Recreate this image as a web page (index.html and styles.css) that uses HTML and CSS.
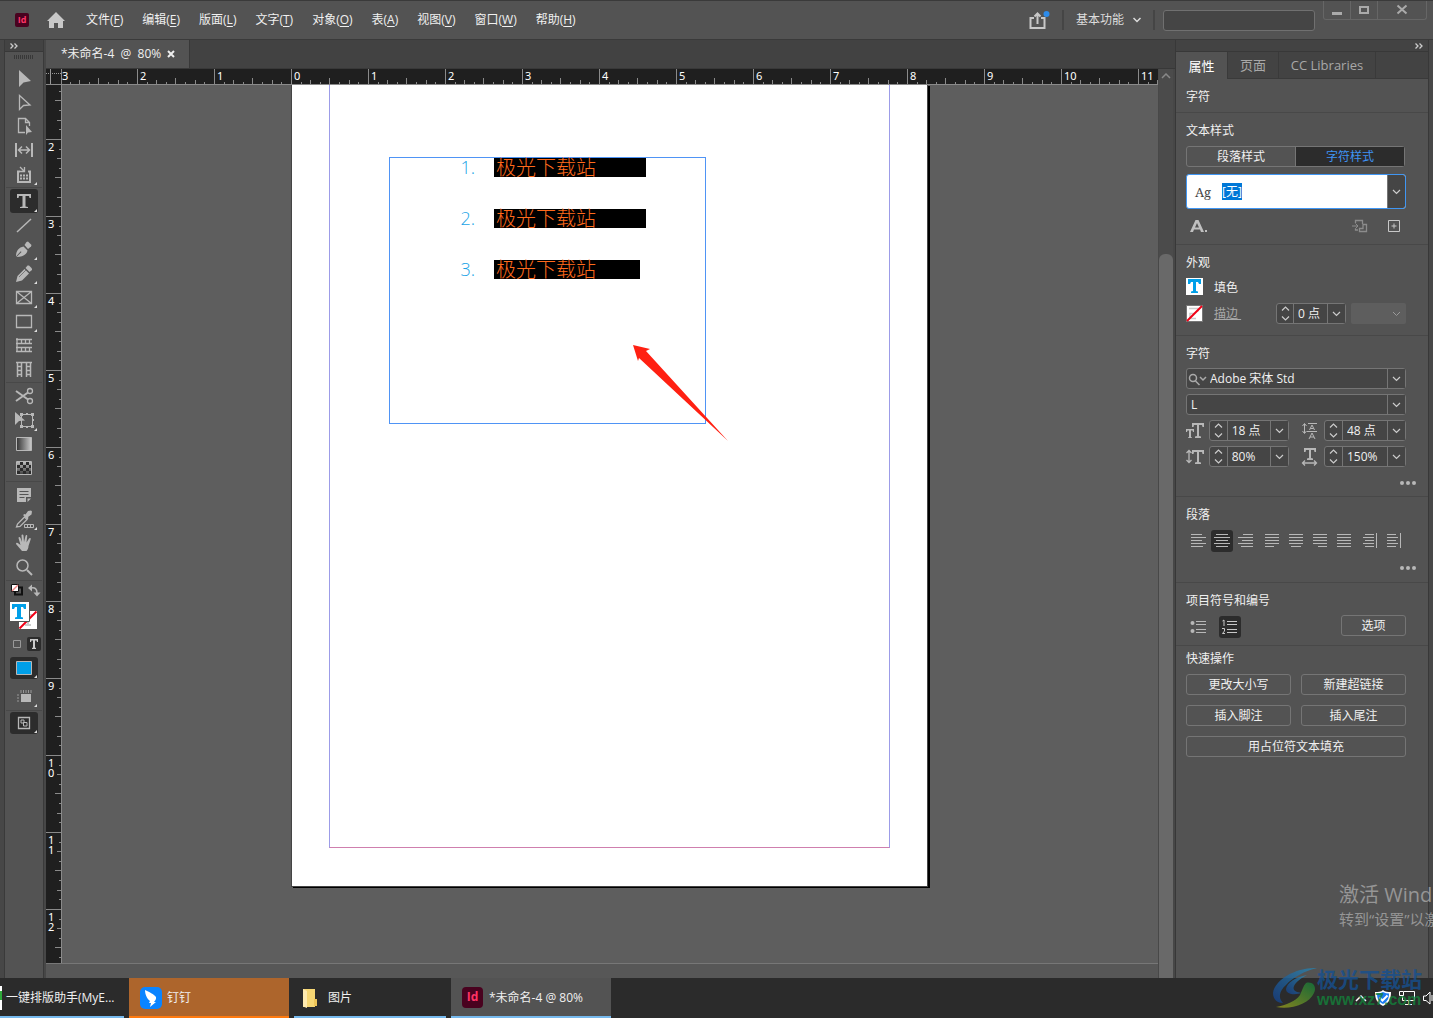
FILE: index.html
```html
<!DOCTYPE html>
<html lang="zh-CN">
<head>
<meta charset="utf-8">
<title>*未命名-4 @ 80%</title>
<link rel="stylesheet" href="styles.css">
</head>
<body>
<header class="topbar">
  <span class="id-logo">Id</span>
  <button class="home" aria-label="主页"><svg width="18" height="16" viewBox="0 0 18 16"><path d="M9 0 18 9h-2v7h-5v-5H7v5H2V9H0z" fill="#c8c8c8"/></svg></button>
  <nav class="menu">
    <button>文件(<u>F</u>)</button><button>编辑(<u>E</u>)</button><button>版面(<u>L</u>)</button><button>文字(<u>T</u>)</button><button>对象(<u>O</u>)</button><button>表(<u>A</u>)</button><button>视图(<u>V</u>)</button><button>窗口(<u>W</u>)</button><button>帮助(<u>H</u>)</button>
  </nav>
  <div class="top-right">
    <button class="share" aria-label="共享"><svg width="22" height="20" viewBox="0 0 22 20"><path d="M6 8H2.500v10h14V8H13M9.500 14V4M6.500 6.500l3-3 3 3" fill="none" stroke="#c8c8c8" stroke-width="2"/><circle cx="18.500" cy="4" r="3" fill="#2d8ceb"/></svg></button>
    <i class="bar"></i>
    <button class="workspace">基本功能<svg width="8" height="6" viewBox="0 0 8 6"><path d="M.5 1 4 4.500 7.500 1" fill="none" stroke="#ddd" stroke-width="1.500"/></svg></button>
    <i class="bar"></i>
    <input class="search" type="text" aria-label="搜索">
    <div class="win-controls">
      <button aria-label="最小化"><svg width="12" height="12"><path d="M1 8h10v3H1z" fill="#aaa"/></svg></button>
      <button aria-label="最大化"><svg width="12" height="12"><path d="M2 3h8v6H2z" fill="none" stroke="#aaa" stroke-width="2"/></svg></button>
      <button class="close" aria-label="关闭"><svg width="12" height="12"><path d="m1.500 1.500 9 8m0-8-9 8" stroke="#aaa" stroke-width="2"/></svg></button>
    </div>
  </div>
</header>

<main class="main">
  <aside class="tools">
    <div class="strip"><svg width="8" height="6"><path d="m.5.500 2.500 2.500L.5 5.500m4-5L7 3 4.500 5.500" fill="none" stroke="#ccc" stroke-width="1.300"/></svg></div>
    <div class="grip"></div>
    <div class="tool-group">
      <button aria-label="选择"><svg width="28" height="24"><path d="M9 4v17l4.500-4.500L21 15z" fill="#b8b8b8"/></svg></button>
      <button aria-label="直接选择"><svg width="28" height="24"><path d="M9.500 5.500v14l4-4 6.500-.5z" fill="none" stroke="#b8b8b8" stroke-width="1.300"/></svg></button>
      <button aria-label="页面"><svg width="28" height="24"><path d="M15 18.500H8.500v-14h7l4 4V12M15.500 4.500v4h4" fill="none" stroke="#b8b8b8" stroke-width="1.300"/><path d="M16 11v10l2-2.500 4-.500z" fill="#b8b8b8"/></svg></button>
      <button aria-label="间隙"><svg width="28" height="24"><path d="M6 5v14M22 5v14" stroke="#b8b8b8" stroke-width="2"/><path d="M9 12h10M12 8.500 8.500 12l3.500 3.500M16 8.500l3.500 3.500-3.500 3.500" fill="none" stroke="#b8b8b8" stroke-width="1.500"/></svg></button>
      <button class="more" aria-label="内容收集器"><svg width="28" height="24"><path d="M10 9.500H8V20h12V9.500h-2" fill="none" stroke="#b8b8b8" stroke-width="2"/><path d="M10 13.500h2m1 0h2m1 0h2m-8 3h2m1 0h2m1 0h2" stroke="#b8b8b8" stroke-width="2"/><path d="m10 5 4 4m.500-4v4.500H10" fill="none" stroke="#b8b8b8" stroke-width="1.300"/></svg></button>
    </div>
    <div class="tool-group">
      <button class="more on" aria-label="文字"><svg width="28" height="24"><path d="M7 5h14v4h-1.500L19 7h-3.500v10.500l2.500.500v1h-8v-1l2.500-.500V7H9l-.500 2H7z" fill="#b8b8b8"/></svg></button>
      <button aria-label="直线"><svg width="28" height="24"><path d="m7 19 14-13" stroke="#b8b8b8" stroke-width="1.500"/></svg></button>
      <button class="more" aria-label="钢笔"><svg width="28" height="24"><path d="M6 19.500c0-6 3-9 7.500-10l4 4C17 17 13 20 6.500 20l5-5-.700-.700z" fill="#b8b8b8"/><path d="m14.500 8 2-3 1.500-.500 3.500 3.500-.500 1.500-3 2.500z" fill="#b8b8b8"/></svg></button>
      <button class="more" aria-label="铅笔"><svg width="28" height="24"><path d="m6 21 1.500-6 7-7 4.500 4.500-7 7z" fill="#b8b8b8"/><path d="m15.500 7 2-2.500h1.500l3 3v1.500l-2.500 2z" fill="#b8b8b8"/><path d="m9 16 7-7" stroke="#777"/></svg></button>
      <button class="more" aria-label="矩形框架"><svg width="28" height="24"><path d="M6.500 6.500h15v12h-15zl15 12m0-12-15 12" fill="none" stroke="#b8b8b8" stroke-width="1.300"/></svg></button>
      <button class="more" aria-label="矩形"><svg width="28" height="24"><path d="M6.500 6.500h15v12h-15z" fill="none" stroke="#b8b8b8" stroke-width="1.300"/></svg></button>
      <button aria-label="水平网格"><svg width="28" height="24"><path d="M7 5v14M6 6.500h16M6 10.500h16M6 14.500h16M6 18.500h16M11.500 6v4m4-4v4m4-4v4m-8 4.500v4m4-4v4m4-4v4" fill="none" stroke="#b8b8b8" stroke-width="1.300"/></svg></button>
      <button aria-label="垂直网格"><svg width="28" height="24"><path d="M6 5.500h16M7.500 5v15M11.500 5v15M16.500 5v15M20.500 5v15M7.500 9.500h4m-4 4h4m-4 4h4m5-8h4m-4 4h4m-4 4h4" fill="none" stroke="#b8b8b8" stroke-width="1.500"/></svg></button>
    </div>
    <div class="tool-group">
      <button aria-label="剪刀"><svg width="28" height="24"><path d="m6 7 12 8.500M6 17l12-8.500" stroke="#b8b8b8" stroke-width="2"/><circle cx="20" cy="7" r="2.500" fill="none" stroke="#b8b8b8" stroke-width="1.300"/><circle cx="20" cy="17" r="2.500" fill="none" stroke="#b8b8b8" stroke-width="1.300"/></svg></button>
      <button class="more" aria-label="自由变换"><svg width="28" height="24"><path d="M11.500 6.500h11v12h-11z" fill="none" stroke="#b8b8b8"/><path d="M10 5h3v3h-3zm6 0h2v2h-2zm5 0h3v3h-3zm0 12h3v3h-3zm-5 1h2v2h-2zm-6-1h3v3h-3zm12-6h2v2h-2z" fill="#b8b8b8"/><path d="M5 4v13l4-4 6-.500z" fill="#b8b8b8"/></svg></button>
      <button aria-label="渐变色板"><svg width="28" height="24"><defs><linearGradient id="g"><stop stop-color="#333"/><stop offset="1" stop-color="#ccc"/></linearGradient></defs><path d="M6.500 5.500h15v13h-15z" fill="url(#g)" stroke="#b8b8b8"/></svg></button>
      <button aria-label="渐变羽化"><svg width="28" height="24"><defs><linearGradient id="f" x2="0" y2="1"><stop stop-color="#bbb"/><stop offset="1" stop-color="#444"/></linearGradient></defs><path d="M6.500 5.500h15v13h-15z" fill="#2c2c2c" stroke="#b8b8b8"/><path d="M7 6h3v3H7zm6 0h3v3h-3zm-3 3h3v3h-3zm6 0h3v3h-3zm-9 3h3v3H7zm6 0h3v3h-3zm-3 3h3v3h-3zm6 0h3v3h-3zm3-9h2v3h-2zm0 6h2v3h-2z" fill="url(#f)"/></svg></button>
    </div>
    <div class="tool-group">
      <button aria-label="附注"><svg width="28" height="24"><path d="M7 5h14v9h-5v5H7z" fill="#b8b8b8"/><path d="M17.500 19v-3.500H21z" fill="#b8b8b8"/><path d="M9.500 8.500h9m-9 3h9m-9 3h5" stroke="#535353"/></svg></button>
      <button class="more" aria-label="吸管"><svg width="28" height="24"><path d="m6.500 20 1-3 7-7 2.500 2.500-7 7z" fill="none" stroke="#b8b8b8" stroke-width="1.300"/><path d="m13 8 1.500-1 1 .500 2.500-3.500 3-.500 1 1-.500 3-3.500 2.500.500 1-1 1.500z" fill="#b8b8b8"/><path d="M14.500 17.500h9v3h-9zm3 0v3m3-3v3" fill="none" stroke="#b8b8b8"/></svg></button>
      <button aria-label="抓手"><svg width="28" height="24"><path d="M12 20c-2-2-4-5-6-7 0-1.500 1.500-1.500 2.500-.500l2 1.500L8.500 7c0-1.500 1.500-1.500 2 0l1.500 4-.5-6.500c0-1.500 1.700-1.500 2 0l.5 6.500 1.500-6c.3-1.400 2-1.200 1.700.3L16.500 11.500l2.500-4c.800-1.200 2.200-.400 1.700.800L18.500 15c0 2-1 4-2 5z" fill="#b8b8b8"/></svg></button>
      <button aria-label="缩放"><svg width="28" height="24"><circle cx="12.500" cy="10.500" r="5.500" fill="none" stroke="#b8b8b8" stroke-width="1.500"/><path d="m17 15 5 5" stroke="#b8b8b8" stroke-width="2"/></svg></button>
    </div>
    <div class="tool-group colors">
      <div class="pair">
        <button aria-label="默认颜色"><svg width="14" height="14"><path d="M5 4.500h7v7H5z" fill="none" stroke="#111" stroke-width="2"/><path d="M1.500 1.500h7v7h-7z" fill="#fff" stroke="#111"/><path d="m2 8 6-6" stroke="#e88" stroke-width="1.500"/></svg></button>
        <button aria-label="互换"><svg width="14" height="14"><path d="M4 5c4-1 6 1 6 5" fill="none" stroke="#b8b8b8" stroke-width="1.500"/><path d="m1 5 4-3.500v7zM10 13.500 6.500 9.500h7z" fill="#b8b8b8"/></svg></button>
      </div>
      <button class="fillstroke" aria-label="填色和描边"><svg width="28" height="28"><path d="M9 9h18v18H9z" fill="#fff"/><path d="M13 13h10m-5 0v10m-3 0h6" stroke="#ccc" stroke-width="2"/><path d="m9.500 26.500 17-17" stroke="#f00016" stroke-width="2"/><path d="M0 0h19v19H0z" fill="#fff"/><path d="M19.500 0v19.500H0" fill="none" stroke="#535353"/><path d="M2 2h14v5h-2l-1-2h-2v10l2 .500V17H5v-1.500L7 15V5H5L4 7H2z" fill="#009fe8"/></svg></button>
      <div class="pair">
        <button aria-label="容器"><svg width="14" height="14"><path d="M3.500 3.500h7v7h-7z" fill="none" stroke="#999"/></svg></button>
        <button class="on" aria-label="文本"><svg width="14" height="14"><path d="M3 2h8v3h-1L9.500 3.500H8v7l1 .500v1H5v-1l1-.500v-7H4.500L4 5H3z" fill="#ccc"/></svg></button>
      </div>
      <button class="more on" aria-label="应用颜色"><svg width="28" height="22"><path d="M6.500 4.500h15v13h-15z" fill="#009fe8" stroke="#b8b8b8"/></svg></button>
      <button class="more" aria-label="视图选项"><svg width="28" height="22"><path d="M11 8h10v8H11z" fill="#b8b8b8"/><path d="M11 4v3m2.500-3v3M16 4v3m2.500-3v3M21 4v3M7 9h2m-2 3h2m-2 3h2" stroke="#999"/></svg></button>
    </div>
    <div class="tool-group last">
      <button class="more on" aria-label="屏幕模式"><svg width="28" height="22"><path d="M8.500 5.500h11v11h-11z" fill="none" stroke="#b8b8b8" stroke-width="1.300"/><path d="M11 8h3v3h-3zM13.500 10.500h3.500v3.500h-3.500z" fill="none" stroke="#b8b8b8"/></svg></button>
    </div>
  </aside>

  <section class="doc">
    <div class="tabs"><div class="doc-tab"><span>*未命名-4&nbsp; @&nbsp; 80%</span><button aria-label="关闭文档"><svg width="8" height="8"><path d="m1 1 6 6m0-6L1 7" stroke="#eee" stroke-width="2"/></svg></button></div></div>
    <div class="stage">
      <div class="corner"></div>
      <div class="ruler-h"><span class="first">3</span><span>2</span><span>1</span><span>0</span><span>1</span><span>2</span><span>3</span><span>4</span><span>5</span><span>6</span><span>7</span><span>8</span><span>9</span><span>10</span><span class="rest">11</span></div>
      <div class="scroll"><svg width="10" height="6"><path d="m1 5 4-4 4 4" fill="none" stroke="#888" stroke-width="1.500"/></svg><i class="thumb"></i></div>
      <div class="ruler-v"><span class="first"></span><span>2</span><span>3</span><span>4</span><span>5</span><span>6</span><span>7</span><span>8</span><span>9</span><span>1<br>0</span><span>1<br>1</span><span class="rest">1<br>2</span></div>
      <div class="canvas">
        <div class="sheet">
          <div class="margins"></div>
          <ol class="frame">
            <li><span class="num">1.</span><mark class="wide">极光下载站</mark></li>
            <li><span class="num">2.</span><mark class="wide">极光下载站</mark></li>
            <li><span class="num">3.</span><mark>极光下载站</mark></li>
          </ol>
          <svg class="arrow" width="96" height="97"><path d="m0 0 17 4-4 2 82 90L6 13l-1 3z" fill="#ff2012"/></svg>
        </div>
      </div>
      <div class="status"></div>
    </div>
  </section>

  <aside class="panel">
    <div class="strip right"><svg width="8" height="6"><path d="m.5.500 2.500 2.500L.5 5.500m4-5L7 3 4.500 5.500" fill="none" stroke="#ccc" stroke-width="1.300"/></svg></div>
    <div class="panel-tabs"><button class="active">属性</button><button>页面</button><button class="cc">CC Libraries</button></div>
    <section class="sec"><h2>字符</h2></section>

    <section class="sec">
      <h2>文本样式</h2>
      <div class="seg"><button>段落样式</button><button class="sel">字符样式</button></div>
      <div class="style-box"><span class="ag">Ag</span><div class="style-text"><mark>[无]</mark></div><button class="dd" aria-label="选择样式"></button></div>
      <div class="row style-actions">
        <button aria-label="清除优先选项"><svg width="18" height="16"><path d="M0 14 5.500 2h3L14 14h-3l-1-2.500H4L3 14zm5-4.500h4L7 5zM15 12h2v2h-2z" fill="#c0c0c0"/></svg></button>
        <button class="push" aria-label="重新定义样式"><svg width="16" height="14"><path d="M3.500 4V1.500h7V5M3.500 9.500V11H6M11 5.500h3.500v7H7.500V9.500H11z" fill="none" stroke="#8c8c8c" stroke-width="1.300"/><path d="M0 7h5M3.500 4.500 6 7 3.500 9.500" fill="none" stroke="#8c8c8c"/></svg></button>
        <button aria-label="新建样式"><svg width="12" height="12"><path d="M.5.500h11v11H.5zM3.500 6h5M6 3.500v5" fill="none" stroke="#c8c8c8"/></svg></button>
      </div>
    </section>

    <section class="sec">
      <h2>外观</h2>
      <div class="row swatch"><svg width="17" height="17"><path d="M0 0h17v17H0z" fill="#fff"/><path d="M2 1h13v5h-2l-1-2h-2v9l2 .500V15H5v-1.500L7 13V4H5L4 6H2z" fill="#009fe8"/></svg><span>填色</span></div>
      <div class="row swatch"><svg width="17" height="17"><path d="M.5.500h16v16H.5z" fill="#fff" stroke="#777"/><path d="M3 3.500h9v3M8 8.500h-4v5h6" fill="none" stroke="#ccc" stroke-width="1.500"/><path d="m1 16 15-15" stroke="#f00016" stroke-width="2"/></svg><a href="#stroke">描边&nbsp;</a>
        <div class="combo stroke"><i class="step"></i><input value="0 点" aria-label="描边粗细"><button class="dd" aria-label="粗细列表"></button></div>
        <select class="stroke-type" aria-label="描边类型" disabled><option></option></select></div>
    </section>

    <section class="sec chars">
      <h2>字符</h2>
      <div class="combo"><svg class="find" width="20" height="14"><circle cx="5" cy="5" r="3.500" fill="none" stroke="#aaa" stroke-width="1.500"/><path d="m7.500 8 4 4M12 4l3 3 3-3" fill="none" stroke="#aaa" stroke-width="1.500"/></svg><input value="Adobe 宋体 Std" aria-label="字体"><button class="dd" aria-label="字体列表"></button></div>
      <div class="combo"><input value="L" aria-label="字体样式"><button class="dd" aria-label="样式列表"></button></div>
      <div class="row metrics">
        <svg width="18" height="18"><path d="M6 1h12v4h-1.500L16 3h-3v11l2 .500V16H9v-1.500l2-.500V3H8l-.500 2H6zM0 7h8v3H7L6.500 8.500H5V15l1 .500v.500H2v-.500L3 15V8.500H1.500L1 10H0z" fill="#b8b8b8"/></svg>
        <div class="combo"><i class="step"></i><input value="18 点" aria-label="字体大小"><button class="dd" aria-label="大小列表"></button></div>
        <svg width="18" height="18"><path d="M3.500 2v9M1.500 4l2-2.500 2 2.500m-4 5 2 2.500 2-2.500M7 1.500h9M6 9.500h10M8.500 8 11 3l2.500 5m-4-1.500h3M8 17l3-6 3 6m-5-2h4" fill="none" stroke="#b8b8b8"/></svg>
        <div class="combo"><i class="step"></i><input value="48 点" aria-label="行距"><button class="dd" aria-label="行距列表"></button></div>
      </div>
      <div class="row metrics">
        <svg width="18" height="18"><path d="M3 3v11M.5 5 3 2.500 5.500 5M.5 12 3 14.500 5.500 12" fill="none" stroke="#b8b8b8" stroke-width="1.300"/><path d="M6 2h12v4h-1.500L16 4h-3v10l2 .500V16H9v-1.500l2-.500V4H8l-.500 2H6z" fill="#b8b8b8"/></svg>
        <div class="combo"><i class="step"></i><input value="80%" aria-label="垂直缩放"><button class="dd" aria-label="垂直缩放列表"></button></div>
        <svg width="18" height="18"><path d="M3 0h12v4h-1.500L13 2h-3v8l2 .500V12H6v-1.500L8 10V2H5l-.500 2H3z" fill="#b8b8b8"/><path d="M2 15h13M4 12.500 1.500 15 4 17.500m9-5 2.500 2.500-2.500 2.500" fill="none" stroke="#b8b8b8" stroke-width="1.300"/></svg>
        <div class="combo"><i class="step"></i><input value="150%" aria-label="水平缩放"><button class="dd" aria-label="水平缩放列表"></button></div>
      </div>
      <button class="dots" aria-label="更多选项"><i></i><i></i><i></i></button>
    </section>

    <section class="sec para">
      <h2>段落</h2>
      <div class="row aligns">
        <button aria-label="左对齐"><svg width="16" height="16"><path d="M1 1.500h11M1 4.500h15M1 7.500h11M1 10.500h15M1 13.500h12"/></svg></button>
        <button class="on" aria-label="居中"><svg width="16" height="16"><path d="M2 1.500h12M0 4.500h16M2 7.500h12M0 10.500h16M2 13.500h12"/></svg></button>
        <button class="wide" aria-label="右对齐"><svg width="16" height="16"><path d="M5 1.500h10M0 4.500h15M4 7.500h11M0 10.500h15M3 13.500h12"/></svg></button>
        <button aria-label="双齐末行齐左"><svg width="16" height="16"><path d="M1 1.500h14M1 4.500h14M1 7.500h14M1 10.500h14M1 13.500h9"/></svg></button>
        <button aria-label="双齐末行居中"><svg width="16" height="16"><path d="M1 1.500h14M1 4.500h14M1 7.500h14M1 10.500h14M3 13.500h10"/></svg></button>
        <button aria-label="双齐末行齐右"><svg width="16" height="16"><path d="M1 1.500h14M1 4.500h14M1 7.500h14M1 10.500h14M6 13.500h9"/></svg></button>
        <button class="wide" aria-label="全部强制双齐"><svg width="16" height="16"><path d="M1 1.500h14M1 4.500h14M1 7.500h14M1 10.500h14M1 13.500h14"/></svg></button>
        <button aria-label="朝向书脊"><svg width="16" height="16"><path d="M3 1.500h9M1 4.500h11M3 7.500h9M1 10.500h11M3 13.500h9M14.500 0v15"/></svg></button>
        <button aria-label="背向书脊"><svg width="16" height="16"><path d="M1 1.500h9M1 4.500h11M1 7.500h9M1 10.500h11M1 13.500h9M14.500 0v15"/></svg></button>
      </div>
      <button class="dots" aria-label="更多段落选项"><i></i><i></i><i></i></button>
    </section>

    <section class="sec bullets">
      <h2>项目符号和编号</h2>
      <div class="row lists">
        <button aria-label="项目符号"><svg width="16" height="16"><path d="M6 2.500h10M6 5.500h10M6 10.500h10M6 13.500h10" stroke="#b8b8b8"/><circle cx="2.500" cy="4" r="2" fill="#b8b8b8"/><circle cx="2.500" cy="12" r="2" fill="#b8b8b8"/></svg></button>
        <button class="on" aria-label="编号"><svg width="16" height="16"><path d="M5 2.500h10M5 5.500h10M5 10.500h10M5 13.500h10M.5 2 2 1v6M0 9.500h2.500V12L.5 14.500H3" fill="none" stroke="#c8c8c8"/></svg></button>
        <button class="btn">选项</button>
      </div>
    </section>

    <section class="sec quick">
      <h2>快速操作</h2>
      <div class="actions"><button class="btn">更改大小写</button><button class="btn">新建超链接</button><button class="btn">插入脚注</button><button class="btn">插入尾注</button><button class="btn full">用占位符文本填充</button></div>
    </section>
  </aside>
</main>

<footer class="taskbar">
  <button class="task t1"><i class="edge"></i>一键排版助手(MyE...</button>
  <button class="task alert"><svg width="22" height="22"><rect width="22" height="22" rx="5" fill="#0a84ff"/><path d="M5 3c4 2 9 4 11 7 .5 2-1 4-2 5h2l-6 5 1-4H9l1-2C7 12 5 7 5 3z" fill="#fff"/></svg>钉钉</button>
  <button class="task folder"><svg width="16" height="22"><path d="M1 2h12v18H1z" fill="#f7d774"/><path d="M1 2l4 2v17l-4-1.500z" fill="#ffebb0"/><path d="M12 12h3v7h-3z" fill="#eec558"/></svg>图片</button>
  <button class="task current"><span class="id-logo big">Id</span>*未命名-4 @ 80%</button>
  <div class="tray">
    <svg width="12" height="8"><path d="m1 7 5-5 5 5" fill="none" stroke="#fff" stroke-width="1.500"/></svg>
    <svg width="16" height="16"><path d="M8 0c2 2 5 2 8 2 0 7-2 11-8 14C2 13 0 9 0 2c3 0 6 0 8-2z" fill="#fff"/><path d="M8 2c2 1 4 1.500 6 1.500C14 9 12 12 8 14 4 12 2 9 2 3.500 4 3.500 6 3 8 2z" fill="#1b7bf2"/><path d="m4.500 7.500 3 3 5-5" fill="none" stroke="#fff" stroke-width="2"/></svg>
    <svg width="16" height="14"><path d="M5 .5h10.500v9H3.500V5M.5.500h4v4h-4zM6 13.500h7M9.500 9.500v4" fill="none" stroke="#fff"/></svg>
    <svg width="10" height="14"><path d="M.5 5H3l4-4v12L3 9.500H.5zM9 4v6" fill="none" stroke="#fff"/></svg>
  </div>
</footer>

<div class="activate"><p class="a1">激活 Windows</p><p class="a2">转到“设置”以激活</p></div>
<div class="site-mark">
  <svg width="44" height="42" viewBox="0 0 44 42"><defs><linearGradient id="b" x1="0" y1="1" x2="1" y2="0"><stop stop-color="#163f86"/><stop offset="1" stop-color="#2a86b0"/></linearGradient><linearGradient id="y" x1="0" y1="1" x2="1" y2="0"><stop stop-color="#9c9a1c"/><stop offset="1" stop-color="#147a3a"/></linearGradient></defs><path d="M44 1C24 0 2 12 0 26c0 7 5 10 10 10-5-5-4-12 3-18C20 10 32 4 44 1z" fill="url(#b)"/><path d="M34 8c-12 2-20 8-21 14 0 6 10 6 15 4-4-1-9-2-7-7 2-4 7-8 13-11z" fill="url(#b)"/><path d="M3 40c10-2 20-6 24-12 2-4 3-9 6-12 7-2 11 4 8 10C36 37 18 43 3 40z" fill="url(#y)"/></svg>
  <div><p class="m1">极光下载站</p><p class="m2">www.xz7.com</p></div>
</div>
</body>
</html>
```
FILE: styles.css
```css
* { box-sizing: border-box; }
body {
  margin: 0;
  min-height: 100vh;
  display: flex;
  flex-direction: column;
  overflow-x: hidden;
  background: #535353;
  color: #f0f0f0;
  font: 12px/16px "Open Sans", "Noto Sans CJK SC", sans-serif;
}
button, input, select { font: inherit; color: inherit; margin: 0; padding: 0; border: 0; background: none; }
button { display: flex; align-items: center; justify-content: center; white-space: nowrap; }
svg { display: block; flex: none; }
h2, p, ol { margin: 0; padding: 0; font-size: 12px; font-weight: 400; }
input { min-width: 0; outline: 0; }

/* Top bar */
.topbar { height: 40px; display: flex; align-items: center; padding: 0 6px 0 15px; border-top: 1px solid #3a3a3a; border-bottom: 1px solid #3a3a3a; }
.id-logo { width: 14px; height: 14px; border-radius: 2px; background: #49021f; color: #ff3366; font-size: 9px; font-weight: 700; line-height: 14px; text-align: center; }
.home { margin: 0 21px 0 18px; }
.menu { display: flex; gap: 19px; }
.menu u { text-underline-offset: 2px; }
.top-right { margin-left: auto; display: flex; align-items: center; align-self: stretch; }
.bar { width: 2px; height: 20px; margin: 0 12px; background: #454545; }
.top-right .bar:nth-of-type(2) { margin: 0 8px 0 12px; }
.workspace { gap: 9px; color: #ddd; }
.search { width: 152px; height: 21px; border: 1px solid #707070; border-radius: 3px; background: #454545; }
.win-controls { display: flex; align-self: flex-start; margin-left: 8px; height: 19px; border: 1px solid #666; border-top: 0; border-radius: 0 0 3px 3px; }
.win-controls button { width: 27px; border-right: 1px solid #666; }
.win-controls .close { width: 48px; border: 0; }

.main { flex: 1; display: flex; padding: 0 4px; background: #474747; }
.strip { height: 12px; padding: 3px 5px; background: #434343; border-bottom: 1px solid #383838; }
.strip.right { display: flex; justify-content: flex-end; }

/* Toolbox */
.tools { width: 40px; margin-right: 2px; background: #535353; border: solid #3a3a3a; border-width: 0 1px; }
.grip { width: 20px; height: 4px; margin: 3px auto 7px; background: repeating-linear-gradient(90deg, #383838 0 1px, #535353 1px 2px); }
.tool-group { padding-left: 5px; }
.tool-group::after { content: ""; display: block; height: 1px; margin: 1px 1px 1px -4px; background: #484848; }
.tool-group > button { position: relative; width: 28px; height: 24px; border-radius: 3px; }
.tool-group .on { background: #2c2c2c; }
.more::after { content: ""; position: absolute; right: 1px; bottom: 1px; border: solid transparent; border-width: 3px 0 0 3px; border-right: 3px solid #ddd; border-top: 3px solid transparent; border-left: 0; }
.pair { display: flex; gap: 3px; height: 16px; align-items: center; }
.pair button { width: 14px; height: 14px; border-radius: 2px; }
.colors .fillstroke { height: 28px; margin: 4px 0 6px; }
.colors .more { height: 22px; margin: 5px 0 7px; }
.colors .more:last-child { margin-bottom: 2px; }
.last::after { display: none; }
.last > button { height: 22px; }

/* Document window */
.doc { flex: 1; min-width: 0; display: flex; flex-direction: column; }
.tabs { height: 29px; display: flex; background: #424242; border-bottom: 1px solid #383838; }
.doc-tab { width: 144px; display: flex; align-items: center; gap: 6px; padding-left: 15px; background: #535353; border-right: 1px solid #383838; white-space: nowrap; }
.stage { flex: 1; display: grid; grid-template: 16px 1fr 15px / 16px 1fr 15px; margin-right: 2px; }
.corner { background: #1f1f1f; border: solid #8a8a8a; border-width: 0 1px 1px 0; background-image: repeating-linear-gradient(90deg, transparent 0 1px, #1f1f1f 1px 2px), linear-gradient(90deg, transparent 4px, #999 4px 5px, transparent 5px), linear-gradient(transparent 4px, #999 4px 5px, transparent 5px); }
.ruler-h, .ruler-v { display: flex; overflow: hidden; background: #1f1f1f; color: #fff; font: 11px/13px "Noto Sans", sans-serif; }
.ruler-h { border-bottom: 1px solid #8a8a8a; }
.ruler-h span { flex: none; width: 77px; padding: 0 0 0 3px; background: url("data:image/svg+xml,%3Csvg xmlns='http://www.w3.org/2000/svg' width='77' height='15'%3E%3Cpath d='M.5 0v15M10.500 13v2M19.500 11v4M29.500 13v2M38.500 9v6M48.500 13v2M58.500 11v4M67.500 13v2' stroke='%238a8a8a'/%3E%3C/svg%3E"); }
.ruler-h .first { width: 75px; padding-left: 0; background-position: -2px 0; }
.ruler-h .rest { flex: 1; }
.ruler-v { grid-row: 2; grid-column: 1; flex-direction: column; border-right: 1px solid #8a8a8a; line-height: 10px; }
.ruler-v span { flex: none; height: 77px; padding: 3px 0 0 2px; background: url("data:image/svg+xml,%3Csvg xmlns='http://www.w3.org/2000/svg' width='15' height='77'%3E%3Cpath d='M0 .5h15M13 10.500h2M11 19.500h4M13 29.500h2M9 38.500h6M13 48.500h2M11 58.500h4M13 67.500h2' stroke='%238a8a8a'/%3E%3C/svg%3E"); }
.ruler-v .first { height: 54px; background-position: 0 -23px; }
.ruler-v .rest { flex: 1; }
.scroll { grid-row: 1 / 4; grid-column: 3; display: flex; flex-direction: column; align-items: center; padding-top: 4px; background: #4b4b4b; border-left: 1px solid #484848; }
.thumb { width: 100%; flex: 1; margin-top: 175px; border-radius: 6px 6px 0 0; background: #696969; }
.canvas { grid-row: 2; grid-column: 2; min-width: 0; overflow: hidden; background: #5e5e5e; }
.status { grid-row: 3; grid-column: 1 / 3; background: #575757; border-top: 1px solid #777; }
.sheet { position: relative; width: 637px; height: 802px; margin-left: 229px; background: #fff; border: 1px solid #444; border-top: 0; box-shadow: 2px 1px 0 #000; }
.margins { position: absolute; left: 37px; top: 0; width: 561px; height: 763px; border: solid #9c9ce8; border-width: 0 1px; border-bottom: 1px solid #cf7fae; }
.frame { position: absolute; left: 97px; top: 72px; width: 317px; height: 267px; border: 1px solid #4f94f5; list-style: none; }
.frame li { display: flex; align-items: center; height: 19px; margin-bottom: 32px; line-height: 19px; }
.num { width: 104px; padding-right: 19px; text-align: right; color: #1aa3e6; font-size: 18px; font-weight: 300; }
.frame mark { width: 146px; height: 19px; padding-left: 2px; background: #000; color: #ff6a1c; font: 300 20px/17px "Noto Sans CJK SC", sans-serif; }
.frame mark.wide { width: 152px; }
.arrow { position: absolute; left: 341px; top: 260px; }

/* Properties panel */
.panel { width: 254px; background: #535353; border: solid #383838; border-width: 0 1px; }
.panel-tabs { display: flex; height: 27px; background: #434343; border-bottom: 1px solid #3a3a3a; }
.panel-tabs button { width: 51px; color: #a8a8a8; font-size: 13px; border-right: 1px solid #3a3a3a; }
.panel-tabs .active { width: 52px; height: 27px; background: #535353; color: #fff; }
.panel-tabs .cc { width: 97px; }
.sec { display: flex; flex-direction: column; gap: 7px; padding: 10px 22px 7px 10px; border-bottom: 1px solid #484848; }
.sec:nth-of-type(2) { padding-bottom: 9px; }
.sec:nth-of-type(3) { padding-bottom: 11px; }
.row { display: flex; align-items: center; }
.seg { display: flex; height: 21px; border: 1px solid #757575; border-radius: 3px; margin-right: 1px; }
.seg button { flex: 1; }
.seg .sel { border-left: 1px solid #757575; background: #2c2c2c; color: #3f93f4; }
.style-box { display: flex; height: 35px; align-items: center; border: 1px solid #4096f3; border-radius: 3px; background: #fff; color: #444; }
.ag { width: 35px; padding-left: 8px; font: 13px/20px "Noto Serif", "Liberation Serif", serif; }
.style-text { flex: 1; }
.style-text mark { background: #0078d7; color: #fff; }
.style-box .dd { align-self: stretch; border-radius: 0 2px 2px 0; }
.style-actions { height: 19px; padding: 0 6px 0 4px; }
.push { margin: 0 20px 0 auto; }
.swatch { min-height: 18px; gap: 11px; }
.swatch svg { margin-bottom: 1px; }
.swatch span { padding-top: 2px; }
.swatch a { color: #a8a8a8; }
.combo { display: flex; height: 21px; border: 1px solid #757575; border-radius: 3px; background: #454545; }
.combo input { flex: 1; width: 20px; padding-left: 4px; line-height: 19px; }
.dd { flex: none; width: 18px; border-left: 1px solid #757575; background: #454545 url("data:image/svg+xml,%3Csvg xmlns='http://www.w3.org/2000/svg' width='9' height='6'%3E%3Cpath d='M1 1l3.500 3.500L8 1' fill='none' stroke='%23ccc' stroke-width='1.200'/%3E%3C/svg%3E") no-repeat center; }
.step { flex: none; width: 18px; border-right: 1px solid #757575; background: url("data:image/svg+xml,%3Csvg xmlns='http://www.w3.org/2000/svg' width='9' height='15'%3E%3Cpath d='M1 4.500L4.500 1 8 4.500M1 10.500L4.500 14 8 10.500' fill='none' stroke='%23ccc' stroke-width='1.200'/%3E%3C/svg%3E") no-repeat center; }
.stroke { width: 70px; margin-left: auto; }
.stroke .step { width: 17px; }
.stroke-type { width: 55px; height: 21px; margin-left: -6px; border-radius: 2px; appearance: none; background: #5e5e5e url("data:image/svg+xml,%3Csvg xmlns='http://www.w3.org/2000/svg' width='9' height='6'%3E%3Cpath d='M1 1l3.500 3.500L8 1' fill='none' stroke='%23999'/%3E%3C/svg%3E") no-repeat 41px center; opacity: 1; }
.chars { gap: 5px; padding-bottom: 5px; }
.chars h2 { padding-bottom: 1px; }
.find { margin: 4px 0 0 1px; }
.find + input { padding-left: 2px; }
.metrics { justify-content: space-between; }
.metrics .combo { width: 80px; }
.metrics .combo:last-child { width: 82px; }
.metrics svg:nth-of-type(2) { margin-left: 8px; }
.dots { align-self: flex-end; gap: 2px; height: 16px; margin: 1px -10px 0 0; }
.dots i { width: 4px; height: 4px; border-radius: 2px; background: #b8b8b8; }
.chars .dots { margin-top: 3px; }
.para { padding-bottom: 6px; }
.aligns { margin-left: 1px; }
.aligns button, .lists button { flex: none; width: 22px; height: 22px; margin-right: 2px; border-radius: 3px; }
.aligns button.wide { margin-right: 4px; }
.aligns path { stroke: #b8b8b8; fill: none; }
.para .on, .lists .on { background: #2c2c2c; }
.lists button { margin-right: 10px; }
.bullets { gap: 6px; }
.sec .btn { height: 21px; border: 1px solid #757575; border-radius: 3px; }
.lists .btn { width: 65px; margin: 0 0 2px auto; }
.lists { margin-left: 1px; }
.quick { padding-top: 5px; border: 0; }
.actions { display: grid; grid-template-columns: 1fr 1fr; gap: 10px; }
.full { grid-column: 1 / 3; }

/* Taskbar */
.taskbar { display: flex; gap: 5px; height: 40px; background: #2b2b2b; }
.task { justify-content: flex-start; gap: 6px; border-bottom: 2px solid #76b9ed; padding-top: 1px; }
.t1 { width: 124px; gap: 4px; }
.edge { width: 2px; height: 24px; background: linear-gradient(#fff 20%, #2ea83a 20% 60%, #fff 60%); }
.alert { width: 160px; padding-left: 11px; gap: 5px; background: #ad652c; border-color: #ff7a0f; }
.folder { width: 152px; padding-left: 8px; gap: 10px; }
.current { width: 160px; padding-left: 11px; background: #535353; }
.id-logo.big { width: 21px; height: 21px; font-size: 12px; line-height: 20px; border-radius: 4px; }
.tray { margin-left: auto; display: flex; align-items: center; gap: 8px; }

.activate { position: absolute; left: 1339px; right: 0; top: 881px; overflow: hidden; white-space: nowrap; color: #969696; }
.activate .a1 { font-size: 20px; line-height: 28px; }
.activate .a2 { font-size: 15px; line-height: 20px; }
.site-mark { position: absolute; right: 11px; bottom: 9px; display: flex; opacity: .8; }
.site-mark .m1 { color: #17508f; font-size: 21px; font-weight: 700; line-height: 24px; }
.site-mark .m2 { color: #14803a; font: 700 16px/18px "Liberation Sans", sans-serif; }
```
